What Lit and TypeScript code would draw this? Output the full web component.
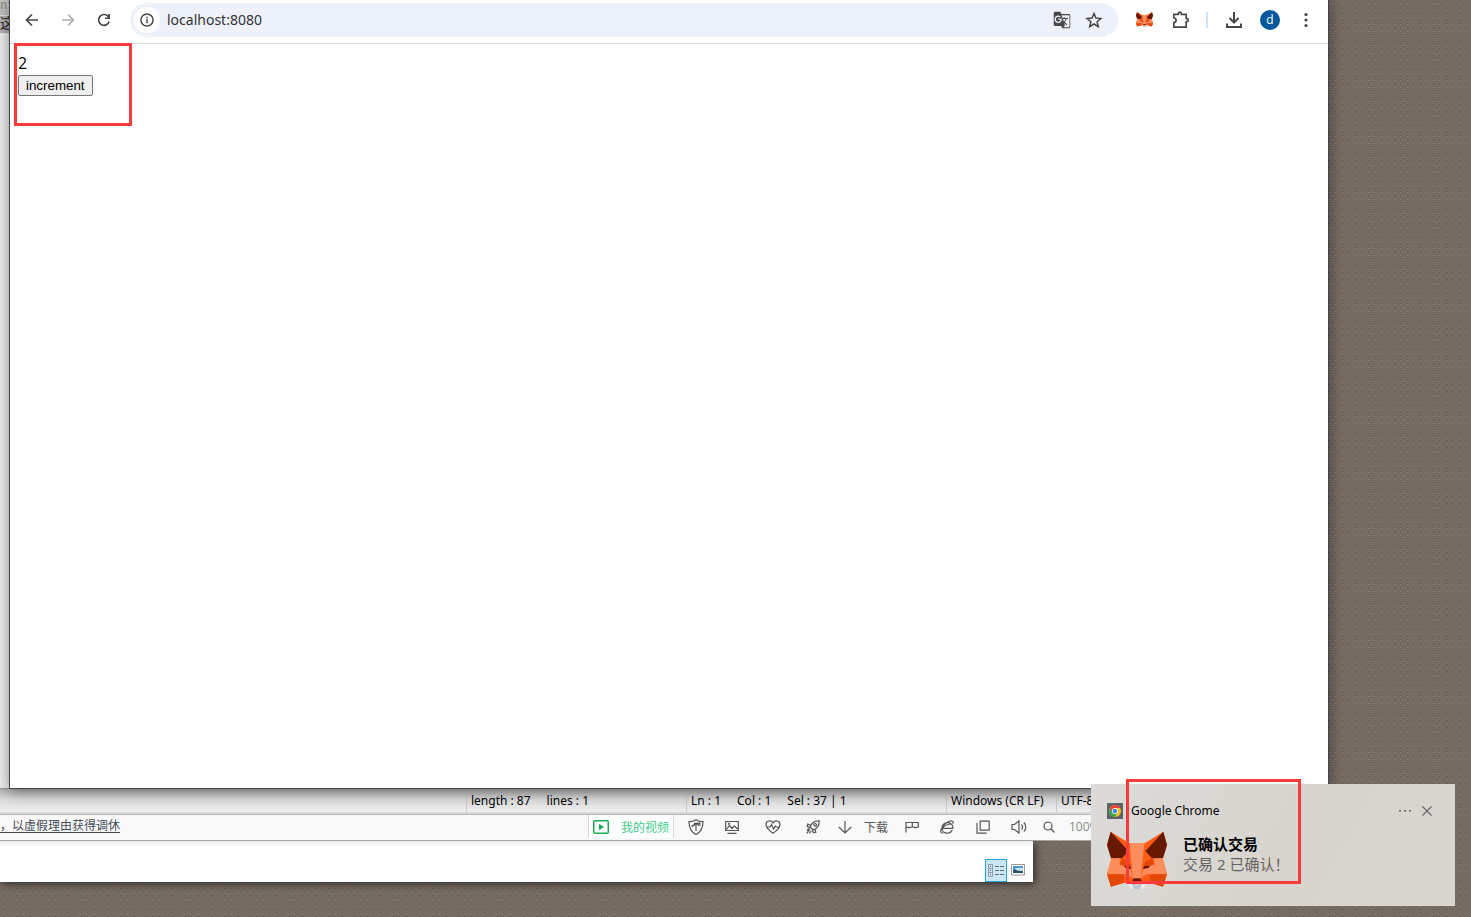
import { LitElement, html, css, svg } from "lit";
import { customElement, state } from "lit/decorators.js";

const foxShape = svg`
  <path fill="#ff5c16" d="M11 2 66 36h48L169 2l11 40-14 42 14 44-12 39-42-12-12 10H66l-12-10-42 12L0 128l14-44L0 42z"/>
  <path fill="#661800" d="M11 2 0 42l12 40h33l20-22zM169 2l11 40-12 40h-33l-20-22z"/>
  <path fill="#ff8d5d" d="M12 82h28l-3 18 34 14 6 26-20-10H0zM168 82h-28l3 18-34 14-6 26 20-10h57z"/>
  <path fill="#e34807" d="m46 82-8 18 34 12-4-16zM134 82l8 18-34 12 4-16z"/>
  <path fill="#ff8d5d" d="M68 36h44l-7 76-3 34H78l-3-34z"/>
  <path fill="#e34807" d="M0 130h50l3 24-41 13zM180 130h-50l-3 24 41 13z"/>
  <path fill="#ff5c16" d="M50 130h12l14 10-5 15-18 1zM130 130h-12l-14 10 5 15 18 1z"/>
  <path fill="#661800" d="M80 142h20l6 12H74zM52 104l16 1 4 9-17-3zM128 104l-16 1-4 9 17-3z"/>
  <path fill="#e7ebf6" d="m54 155 20-2 8 20-8 0zM126 155l-20-2-8 20 8 0z"/>
  <path fill="#c0c4cd" d="M74 154h32l-7 20H81z"/>`;

const fox = (cls: string) => html`<svg class=${cls} viewBox="0 0 180 174" preserveAspectRatio="none" aria-hidden="true">${foxShape}</svg>`;

const line = (size: number, body: unknown) => html`<svg width=${size} height=${size} viewBox="0 0 ${size} ${size}" fill="none" stroke="currentColor" aria-hidden="true">${body}</svg>`;

const icons = {
  back: line(16, svg`<path stroke-width="1.7" d="M14 8H3M8 2.500 2.500 8 8 13.500"/>`),
  forward: line(16, svg`<path stroke-width="1.700" d="M2 8h11M8 2.500 13.500 8 8 13.500"/>`),
  reload: line(16, svg`<path stroke-width="1.700" d="M13.200 9.500A5.400 5.400 0 1 1 12 4.200L13.500 6"/><path fill="currentColor" stroke="none" d="M14 2v5H9V5.500h3.300V2z"/>`),
  info: line(14, svg`<circle cx="7" cy="7" r="6.100" stroke-width="1.500"/><path stroke-width="1.500" d="M7 6.300v4M7 3.700v1.500"/>`),
  star: line(18, svg`<path stroke-width="1.500" d="m9 2.500 1.900 4.600 5 .4-3.800 3.200 1.200 4.900L9 13l-4.300 2.600 1.200-4.900-3.800-3.200 5-.4z"/>`),
  puzzle: line(20, svg`<path stroke-width="1.700" stroke-linejoin="round" d="M3.800 4.300h4.600V3.500a1.400 1.400 0 0 1 2.800 0v.8h5v4.400h.6a1.500 1.500 0 0 1 0 3h-.6v5.500H3.800v-4.600a2.300 2.300 0 0 0 0-4.600z"/>`),
  download: line(18, svg`<path stroke-width="2" d="M9 1v10M4.500 7 9 11.500 13.500 7M2 12.500V16h14v-3.500"/>`),
  menu: html`<svg width="16" height="16" viewBox="0 0 16 16" fill="currentColor" aria-hidden="true"><circle cx="8" cy="2.500" r="1.600"/><circle cx="8" cy="8" r="1.600"/><circle cx="8" cy="13.500" r="1.600"/></svg>`,
  translate: html`<svg width="18" height="18" viewBox="0 0 24 24" fill="currentColor" aria-hidden="true"><path d="M21,4H11l-1-3H3C1.900,1,1,1.900,1,3v15c0,1.100,0.900,2,2,2h8l1,3h9c1.100,0,2-0.900,2-2V6C23,4.900,22.100,4,21,4z M7,16c-2.760,0-5-2.240-5-5s2.240-5,5-5c1.350,0,2.480,0.500,3.350,1.300L9.030,8.570C8.650,8.210,7.990,7.790,7,7.790c-1.740,0-3.150,1.440-3.150,3.210S5.260,14.210,7,14.210c2.010,0,2.840-1.440,2.920-2.410H7v-1.710h4.680C11.750,10.400,11.800,10.700,11.800,11.100C11.800,13.960,9.890,16,7,16z M13.170,10.580h3.700c-0.430,1.250-1.110,2.430-2.050,3.470c-0.310-0.350-0.600-0.720-0.860-1.100L13.170,10.580z M22,20.500c0,0.550-0.450,1-1,1h-7l2-2.500l-1.040-3.100l3.100,3.100l0.920-0.920l-3.300-3.250l0.020-0.020c1.130-1.250,1.930-2.690,2.400-4.220H20v-1.300h-4.530V8h-1.290v1.290h-1.440L11.460,5.500H21c0.550,0,1,0.450,1,1V20.500z"/></svg>`,
  play: line(16, svg`<rect x=".75" y="1.750" width="14.500" height="12.500" rx="1" stroke-width="1.500"/><path fill="currentColor" stroke="none" d="m6 4.800 5 3.200-5 3.200z"/>`),
  shield: line(16, svg`<path d="M8 .7c2 1.500 4.500 2 7 2 0 6-1.500 10-7 12.800C2.500 12.700 1 8.700 1 2.700c2.500 0 5-.5 7-2zM8 6.500V12"/><path stroke-width="1.600" d="M3.500 7.200 8 5.300l4.500 1M6 4.500l6.500-.3"/>`),
  image: line(14, svg`<path d="M.7 1.500h12.600v9H.7zM1.500 9.500l3-4 2.500 3 2.300-2.500 3.500 3M2.500 13.300h9"/><circle cx="4" cy="3.800" r=".5"/>`),
  heart: line(16, svg`<path d="M8 14.300C4 11.500 1 9 1 5.500 1 1.500 6 .8 8 3.800 10 .8 15 1.500 15 5.500c0 3.500-3 6-7 8.800zM1.500 8H5l1.500-2.500 2 4.500L10.300 7l.8 1h3.500"/>`),
  rocket: line(14, svg`<path d="M13.200.9c-4.500-.2-7.500 1.600-9.200 6.100l3 3C11.500 8.500 13.400 5.400 13.200.9zM4.700 5.300l-3-1.200-.4 2.500 2.700 1M8.700 9.300l1.200 3-2.500.4-1-2.700M3.800 9.200.8 13.300M5.200 11l-2 2.200M3 8.500l-2 2"/><circle cx="9.200" cy="4.800" r="1.300"/>`),
  down: line(14, svg`<path d="M7 1v12M.8 7 7 13l6.200-6"/>`),
  flag: line(14, svg`<path d="M1 12.500V2.500h12.300v4.300c-2 1.500-4 1-6 0-2 1-4.300 1-6.300 0M7.300 2.500v4.300"/>`),
  ie: line(14, svg`<path d="M2.200 8.300h10.600c.2-3.500-1.900-5.700-5.200-5.700S1.900 5 1.900 8s2.200 5.200 5.300 5.200c2.400 0 4.200-1.200 5-3.200M3 13.200C-1.500 13.500 1.300 6 7 2.500c3.500-2.200 7.300-2.300 5.800 1.300M2.200 8.300c2-2.600 5-4 8.500-4.300"/>`),
  layers: line(14, svg`<path d="M4.200 1.200h9v9h-9zM1 3v10.200h9.500"/>`),
  speaker: line(16, svg`<path d="M1 5.500h2.500L8 2v12l-4.500-3.500H1zM10.500 5.500c1.300 1.500 1.300 3.500 0 5M12.800 3.500c2.700 2.700 2.700 6.300 0 9"/>`),
  search: line(12, svg`<circle cx="5" cy="5" r="4"/><path d="m8 8 3.500 3.500"/>`),
  more: html`<svg width="14" height="12" viewBox="0 0 14 12" fill="currentColor" aria-hidden="true"><path d="M1 5h2v1.500H1zM6 5h2v1.500H6zM11 5h2v1.500h-2z"/></svg>`,
  close: line(12, svg`<path stroke-width="1.200" d="m1.500 1.500 9 9M10.500 1.500l-9 9"/>`),
  details: html`<svg width="16" height="14" viewBox="0 0 16 14" fill="none" aria-hidden="true"><path stroke="#8c9ba4" d="M.5.500h4v12h-4zM.5 4.500h4M.5 8.500h4"/><path stroke="#667" stroke-dasharray="4 1" d="M7 2.500h9M7 6.500h9M7 10.500h9"/><path fill="#755" d="M2 2h1v1H2zM2 6h1v1H2zM2 10h1v1H2z"/></svg>`,
  picture: html`<svg width="14" height="12" viewBox="0 0 14 12" aria-hidden="true"><path fill="#fff" stroke="#9a9a9a" d="M.5.500h13v10.500H.5z"/><path fill="#4e97dd" d="M2 2h10v4H2z"/><path fill="#c5e1f5" d="M4 4h8v2H5z"/><path fill="#27566d" d="M2 6c3-.8 5 1.500 10 .5V9H2z"/></svg>`,
  chrome: html`<svg width="16" height="16" viewBox="0 0 16 16" aria-hidden="true"><path fill="#5f6368" d="M0 0h16v16H0z"/><circle cx="8" cy="8" r="6" fill="#fbc116"/><path fill="#ea4335" d="M2.800 5A6 6 0 0 1 13.200 5H8L5.400 9.500z"/><path fill="#34a853" d="M2.800 5 5.400 9.500 8 11l2.600-1.500L8 14A6 6 0 0 1 2.800 5z"/><circle cx="8" cy="8" r="3" fill="#fff"/><circle cx="8" cy="8" r="2.300" fill="#4285f4"/></svg>`,
};

@customElement("app-root")
export class AppRoot extends LitElement {
  @state() private count = 2;

  static styles = css`
    :host {
      display: block;
      position: relative;
      height: 100vh;
      overflow: hidden;
      font-family: "Open Sans", "Noto Sans CJK SC", sans-serif;
      font-size: 12px;
      color: #000;
      background-color: #746b62;
      background-image:
        repeating-linear-gradient(90deg, #756c63 0 3px, rgba(117, 108, 99, 0.2) 3px 4px, rgba(117, 108, 99, 0.8) 4px 5px, #756c63 5px 9px, rgba(117, 108, 99, 0.4) 9px 10px, #756c63 10px 13px),
        repeating-linear-gradient(0deg, #554d46 0 1px, #877e75 1px 2px, #6a6158 2px 3px, #9a9188 3px 4px, #5d554d 4px 5px, #756c63 5px 7px);
    }
    * { box-sizing: border-box; }
    button {
      font-family: inherit;
      color: inherit;
    }
    .plain {
      display: inline-flex;
      align-items: center;
      justify-content: center;
      padding: 0;
      border: 0;
      background: none;
      font-size: 12px;
    }
    svg { display: block; flex: none; }

    .editor {
      position: absolute;
      inset: 0 142px 101px 0;
      display: flex;
      flex-direction: column;
      background: #f0f0f0;
    }
    .editor-side {
      flex: 1;
      overflow: hidden;
      color: #888;
      font-family: "Liberation Mono", "Noto Sans CJK SC", monospace;
      border-bottom: 1px solid #999;
    }
    .editor-line { height: 16px; line-height: 12px; background: #c4c4c4; border-bottom: 1px solid #e8e8e8; }
    .editor-line.current { height: 18px; line-height: 16px; font-size: 14px; background: #b5b5b5; color: #222; }
    .status {
      display: grid;
      grid-template-columns: 466px 220px 260px 110px 1fr;
      height: 27px;
      padding: 3px 0 2px;
      line-height: 18px;
      font-family: "Noto Sans", sans-serif;
      background: linear-gradient(#b4b4b4, #dadada 10px, #f0f0f0 24px);
      border-bottom: 1px solid #a6a6a6;
    }
    .status div { display: flex; gap: 16px; padding-left: 4px; white-space: pre; border-left: 1px solid #c9c9c9; }
    .status div:first-child { border: 0; }

    .player {
      position: absolute;
      inset: auto 142px 76px 0;
      height: 29px;
      padding-top: 2px;
      background: #d7d7d7;
      border-bottom: 1px solid #a3a3a3;
    }
    .player-bar {
      display: grid;
      grid-template-columns: 588px 86px 44px 28px 53px 28px 35px 28px 43px 27px 46px 25px 35px 1fr;
      height: 26px;
      padding-bottom: 2px;
      border-top: 1px solid #b5b5b5;
      background: #f9f9f9;
      color: #555;
    }
    .player-bar svg { stroke-width: 1.2; }
    .player-bar a { color: #444b55; line-height: 22px; text-underline-offset: 2px; }
    .player-bar .mine { gap: 12px; color: #1aad55; border: solid #d6d6d6; border-width: 0 1px; background: #fff; }
    .player-bar .mine span { color: #3dcb89; }
    .zoom { line-height: 23px; padding-left: 3px; color: #888; }

    .files {
      position: absolute;
      inset: auto auto 35px 0;
      width: 1033px;
      height: 41px;
      display: flex;
      justify-content: flex-end;
      align-items: flex-end;
      background: linear-gradient(#ececec, #fff 6px);
      box-shadow: 2px 2px 8px rgba(0, 0, 0, 0.6);
    }
    .files .plain { width: 22px; height: 23px; border: 1px solid transparent; }
    .files .on { border-color: #26a0da; background: #cbe8f6; }
    .files .last { width: 26px; padding: 0 4px 2px 0; }

    .browser {
      position: absolute;
      inset: 0 142px 128px 9px;
      display: flex;
      flex-direction: column;
      background: #fff;
      border: solid #444;
      border-width: 0 1px 1px;
      box-shadow: 0 2px 14px rgba(0, 0, 0, 0.45);
    }
    .toolbar {
      display: flex;
      align-items: center;
      height: 44px;
      padding: 0 4px 4px;
      border-bottom: 1px solid #dfe1e4;
      color: #474747;
    }
    .toolbar .plain { width: 36px; height: 36px; }
    .toolbar .plain:disabled { color: #b0b0b0; }
    .omnibox {
      flex: 1;
      display: flex;
      align-items: center;
      height: 34px;
      margin: 0 8px;
      padding: 0 8px 0 4px;
      border-radius: 17px;
      background: #ecf1fa;
    }
    .omnibox .plain { width: 32px; }
    .omnibox .site { width: 26px; height: 26px; border-radius: 13px; background: #fff; }
    .address {
      flex: 1;
      min-width: 0;
      padding: 0 0 0 7px;
      border: 0;
      background: none;
      color: #333;
      font-family: "Noto Sans", sans-serif;
      font-size: 14px;
    }
    .rule { width: 2px; height: 16px; margin: 0 8px; background: #cfe0fb; }
    .avatar { width: 20px; height: 20px; border-radius: 10px; background: #04579b; color: #fff; line-height: 19px; }
    .fox-small { width: 17px; height: 15px; }
    .page { flex: 1; padding: 8px; font-size: 16px; line-height: 23px; }
    .page button {
      display: block;
      height: 21px;
      padding: 0 7px;
      border: 1px solid #767676;
      border-radius: 2px;
      background: #efefef;
      font-family: "Liberation Sans", sans-serif;
    }

    .toast {
      position: absolute;
      right: 16px;
      bottom: 11px;
      width: 364px;
      height: 122px;
      padding: 17px 16px;
      font-family: "Noto Sans", "Noto Sans CJK SC", sans-serif;
      background: linear-gradient(120deg, #dcdbd9, #d8d5ce 50%, #d9d6cf);
    }
    .toast header { display: flex; align-items: center; gap: 8px; height: 19px; }
    .toast header span { flex: 1; line-height: 18px; }
    .toast header .plain { width: 14px; color: #666; }
    .toast header .plain:last-child { margin-right: 5px; }
    .message { display: flex; gap: 16px; padding-top: 11px; font-size: 15px; line-height: 20px; }
    .fox-large { width: 60px; height: 58px; }
    .message h2 { margin: 3px 0 0; font-size: 15px; line-height: 20px; }
    .message p { margin: 0; color: #65635f; }

    .mark { position: absolute; border: 3px solid #fb3b3b; pointer-events: none; }
    .mark-page { left: 14px; top: 43px; width: 118px; height: 83px; }
    .mark-toast { right: 170px; bottom: 33px; width: 175px; height: 105px; }
  `;

  render() {
    return html`
      <section class="editor">
        <div class="editor-side">
          <div class="editor-line">nf</div>
          <div class="editor-line current">这</div>
        </div>
        <div class="status">
          <div></div>
          <div><span>length : 87</span><span>lines : 1</span></div>
          <div><span>Ln : 1</span><span>Col : 1</span><span>Sel : 37 | 1</span></div>
          <div>Windows (CR LF)</div>
          <div>UTF-8</div>
        </div>
      </section>

      <section class="files">
        <button class="plain on" aria-label="Details">${icons.details}</button>
        <button class="plain last" aria-label="Thumbnails">${icons.picture}</button>
      </section>

      <section class="player">
        <div class="player-bar">
          <a href="#">，以虚假理由获得调休</a>
          <button class="plain mine">${icons.play}<span>我的视频</span></button>
          <button class="plain" aria-label="Shield">${icons.shield}</button>
          <button class="plain" aria-label="Image">${icons.image}</button>
          <button class="plain" aria-label="Health">${icons.heart}</button>
          <button class="plain" aria-label="Boost">${icons.rocket}</button>
          <button class="plain" aria-label="Downloads">${icons.down}</button>
          <button class="plain">下载</button>
          <button class="plain" aria-label="Flag">${icons.flag}</button>
          <button class="plain" aria-label="Browser mode">${icons.ie}</button>
          <button class="plain" aria-label="Windows">${icons.layers}</button>
          <button class="plain" aria-label="Sound">${icons.speaker}</button>
          <button class="plain" aria-label="Zoom">${icons.search}</button>
          <span class="zoom">100%</span>
        </div>
      </section>

      <main class="browser">
        <nav class="toolbar">
          <button class="plain" aria-label="Back">${icons.back}</button>
          <button class="plain" aria-label="Forward" disabled>${icons.forward}</button>
          <button class="plain" aria-label="Reload">${icons.reload}</button>
          <div class="omnibox">
            <button class="plain site" aria-label="Site information">${icons.info}</button>
            <input class="address" aria-label="Address" value="localhost:8080" />
            <button class="plain" aria-label="Translate">${icons.translate}</button>
            <button class="plain" aria-label="Bookmark">${icons.star}</button>
          </div>
          <button class="plain" aria-label="MetaMask">${fox("fox-small")}</button>
          <button class="plain" aria-label="Extensions">${icons.puzzle}</button>
          <div class="rule"></div>
          <button class="plain" aria-label="Downloads">${icons.download}</button>
          <button class="plain" aria-label="Profile"><span class="avatar">d</span></button>
          <button class="plain" aria-label="Menu">${icons.menu}</button>
        </nav>
        <div class="page">
          <div>${this.count}</div>
          <button @click=${() => this.count++}>increment</button>
        </div>
      </main>

      <aside class="toast">
        <header>
          ${icons.chrome}<span>Google Chrome</span>
          <button class="plain" aria-label="More">${icons.more}</button>
          <button class="plain" aria-label="Close">${icons.close}</button>
        </header>
        <div class="message">
          ${fox("fox-large")}
          <div>
            <h2>已确认交易</h2>
            <p>交易 2 已确认！</p>
          </div>
        </div>
      </aside>

      <div class="mark mark-page"></div>
      <div class="mark mark-toast"></div>
    `;
  }
}
